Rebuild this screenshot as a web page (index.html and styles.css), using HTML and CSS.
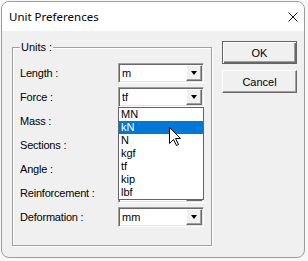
FILE: index.html
```html
<!DOCTYPE html>
<html lang="en">
<head>
    <meta charset="UTF-8">
    <title>Unit Preferences</title>
    <link rel="stylesheet" href="styles.css">
</head>
<body>
    <div class="window">
        <div class="titlebar">
            <span class="title">Unit Preferences</span>
            <svg class="close" width="10" height="10" viewBox="0 0 10 10">
                <path d="M0.5 0.5 L9.5 9.5 M9.5 0.5 L0.5 9.5" stroke="#1a1a1a" stroke-width="1" fill="none"/>
            </svg>
        </div>

        <div class="client">
            <div class="group">
                <div class="legend">Units :</div>
                <div class="rows">
                    <div class="row">
                        <span class="label">Length :</span>
                        <div class="combo"><span class="value">m</span><span class="drop"><i></i></span></div>
                    </div>
                    <div class="row open">
                        <span class="label">Force :</span>
                        <div class="combo"><span class="value">tf</span><span class="drop"><i></i></span></div>
                        <!-- open dropdown list -->
                        <ul class="list">
                            <li>MN</li>
                            <li class="selected">kN</li>
                            <li>N</li>
                            <li>kgf</li>
                            <li>tf</li>
                            <li>kip</li>
                            <li>lbf</li>
                        </ul>
                    </div>
                    <!-- these combos sit under the open list, their values are hidden -->
                    <div class="row">
                        <span class="label">Mass :</span>
                        <div class="combo"><span class="value"></span><span class="drop"><i></i></span></div>
                    </div>
                    <div class="row">
                        <span class="label">Sections :</span>
                        <div class="combo"><span class="value"></span><span class="drop"><i></i></span></div>
                    </div>
                    <div class="row">
                        <span class="label">Angle :</span>
                        <div class="combo"><span class="value"></span><span class="drop"><i></i></span></div>
                    </div>
                    <div class="row">
                        <span class="label">Reinforcement :</span>
                        <div class="combo"><span class="value"></span><span class="drop"><i></i></span></div>
                    </div>
                    <div class="row">
                        <span class="label">Deformation :</span>
                        <div class="combo"><span class="value">mm</span><span class="drop"><i></i></span></div>
                    </div>
                </div>
            </div>

            <div class="buttons">
                <button class="btn default">OK</button>
                <button class="btn">Cancel</button>
            </div>
        </div>
    </div>

    <!-- mouse pointer over the list -->
    <svg class="cursor" width="13" height="20" viewBox="0 0 13 20">
        <path d="M0.5 0.5 L0.5 16.5 L4.5 12.5 L7.5 18.5 L9.5 17.5 L6.5 11.5 L11.5 11.5 Z" fill="#fff" stroke="#000" stroke-width="1" stroke-linejoin="miter"/>
    </svg>
</body>
</html>
```

FILE: styles.css
```css
* {
    margin: 0;
    padding: 0;
    box-sizing: border-box;
}

body {
    background: #f7f7f7;
    padding: 1px 0 0 1px;
    font-family: 'Liberation Sans', Arial, sans-serif;
    font-size: 11px;
    color: #000;
    position: relative;
    overflow: hidden;
}

/* Window frame */
.window {
    width: 304px;
    height: 257px;
    border: 1px solid #9c9c9c;
    border-radius: 8px;
    background: #f0f0f0;
    overflow: hidden;
    display: flex;
    flex-direction: column;
}

.titlebar {
    height: 29px;
    flex-shrink: 0;
    background: #fff;
    display: flex;
    align-items: center;
    justify-content: space-between;
    padding: 0 6px 0 7px;
}

.title {
    font-family: 'Noto Sans', 'Open Sans', sans-serif;
    font-size: 11.5px;
    color: #000;
}

.close {
    display: block;
}

.client {
    flex: 1;
    display: flex;
    align-items: flex-start;
    gap: 10px;
    padding: 10px 0 0 10px;
}

/* Group box */
.group {
    width: 200px;
    height: 199px;
    margin-top: 6px;
    border: 1px solid #a0a0a0;
    box-shadow: inset 1px 1px 0 #fff, 1px 1px 0 #fff;
    padding: 0 6px 0 7px;
}

.legend {
    width: fit-content;
    margin: -7px 0 0 0;
    padding: 0 1px;
    line-height: 13px;
    background: #f0f0f0;
}

.rows {
    margin-top: 9px;
    display: flex;
    flex-direction: column;
    gap: 4px;
}

.row {
    display: grid;
    grid-template-columns: 98px 86px;
    align-items: center;
    height: 20px;
}

.row.open {
    position: relative;
}

.label {
    white-space: nowrap;
    letter-spacing: -0.2px;
}

/* Combo box */
.combo {
    height: 20px;
    border: 1px solid;
    border-color: #a0a0a0 #fff #fff #a0a0a0;
    box-shadow: inset 1px 1px 0 #696969, inset -1px -1px 0 #e3e3e3;
    background: #fff;
    display: flex;
    align-items: center;
    padding: 1px;
}

.value {
    flex: 1;
    padding-left: 2px;
    line-height: 16px;
}

.drop {
    width: 16px;
    height: 16px;
    background: #f0f0f0;
    border: 1px solid;
    border-color: #fff #696969 #696969 #fff;
    box-shadow: inset -1px -1px 0 #a0a0a0;
    display: flex;
    align-items: center;
    justify-content: center;
}

.drop i {
    width: 0;
    height: 0;
    border-top: 4px solid #000;
    border-left: 3.5px solid transparent;
    border-right: 3.5px solid transparent;
}

/* Dropdown list */
.list {
    position: absolute;
    left: 98px;
    top: 20px;
    width: 86px;
    border: 1px solid #646464;
    background: #fff;
    list-style: none;
    z-index: 2;
}

.list li {
    height: 13px;
    line-height: 13px;
    padding-left: 2px;
}

.list li.selected {
    background: #0078d7;
    color: #fff;
}

/* Buttons */
.buttons {
    display: flex;
    flex-direction: column;
    gap: 6px;
}

.btn {
    width: 75px;
    height: 23px;
    font-family: 'Liberation Sans', Arial, sans-serif;
    font-size: 11px;
    color: #000;
    background: #f0f0f0;
    border: 1px solid;
    border-color: #fff #696969 #696969 #fff;
    box-shadow: inset -1px -1px 0 #a0a0a0;
}

.btn.default {
    border: 1px solid #646464;
    box-shadow: inset 1px 1px 0 #fff, inset -1px -1px 0 #696969, inset -2px -2px 0 #a0a0a0;
}

.cursor {
    position: absolute;
    left: 169px;
    top: 127px;
    z-index: 5;
}
```
